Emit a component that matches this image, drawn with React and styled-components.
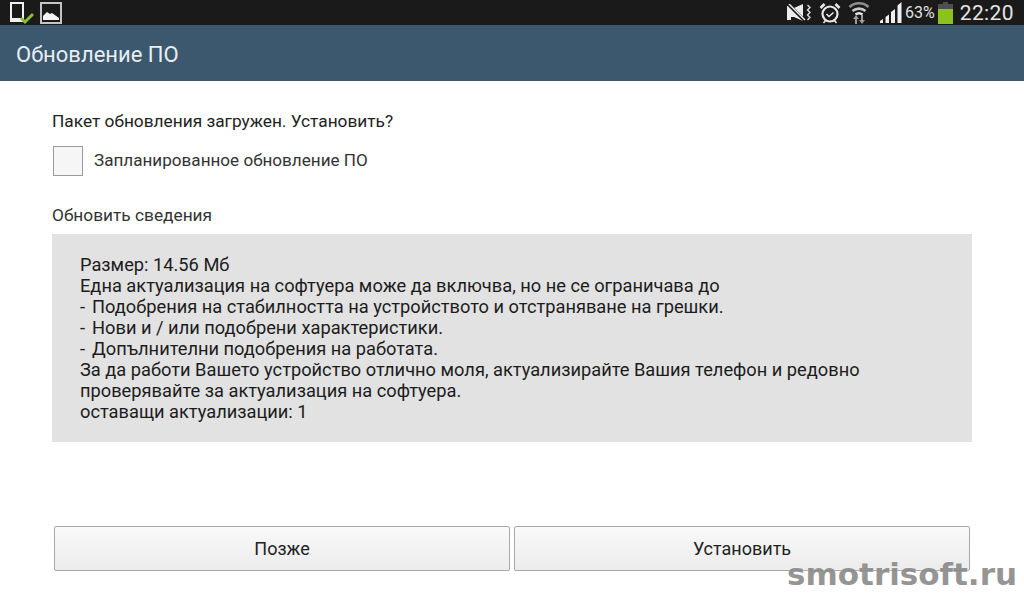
import styled, { createGlobalStyle } from "styled-components";

const GlobalStyle = createGlobalStyle`
    html, body {
        margin: 0;
        padding: 0;
        background: #ffffff;
    }
    * {
        box-sizing: border-box;
    }
`;

const Screen = styled.div`
    position: relative;
    width: 1024px;
    height: 600px;
    overflow: hidden;
    display: flex;
    flex-direction: column;
    background: #ffffff;
    font-family: Roboto, "Noto Sans", sans-serif;
    color: #222222;
`;

const StatusBar = styled.div`
    height: 25px;
    flex: none;
    display: flex;
    align-items: center;
    justify-content: space-between;
    padding: 0 10px;
    background: #1a1a1a;
`;

const StatusGroup = styled.div`
    display: flex;
    align-items: center;
    gap: ${(p) => p.$gap || 0}px;
`;

const IconSlot = styled.span`
    display: flex;
    margin-right: ${(p) => p.$right || 0}px;
`;

const Percent = styled.span`
    font-size: 16px;
    color: #e0e0e0;
    margin: 0 3px;
`;

const Clock = styled.span`
    font-size: 21px;
    color: #e4e4e4;
    margin-left: 7px;
    letter-spacing: 0.4px;
`;

const Header = styled.div`
    height: 56px;
    flex: none;
    display: flex;
    align-items: center;
    padding: 2px 16px 0;
    font-size: 22px;
    color: #e8eef2;
    background: #3c586f;
`;

const Content = styled.div`
    flex: 1;
    display: flex;
    flex-direction: column;
    padding: 30px 52px 0;
`;

const Question = styled.p`
    margin: 0;
    font-size: 17.3px;
    line-height: 20px;
`;

const CheckRow = styled.label`
    display: flex;
    align-items: center;
    gap: 11px;
    margin-top: 15px;
    padding-left: 1px;
    font-size: 17.1px;
    color: #333333;
`;

const CheckBox = styled.span`
    width: 30px;
    height: 30px;
    border: 1px solid #9a9a9a;
    background: #f6f6f6;
`;

const CheckText = styled.span`
    padding-bottom: 2px;
`;

const SectionTitle = styled.p`
    margin: 29px 0 0;
    font-size: 17.3px;
    line-height: 20px;
    color: #333333;
`;

const Details = styled.div`
    width: 920px;
    height: 208px;
    margin-top: 9px;
    padding: 19.6px 28px;
    background: #e2e2e2;
    font-size: 18.25px;
    line-height: 21.1px;
    color: #1c1c1c;
`;

const Dash = styled.span`
    margin-right: 2.5px;
`;

const Actions = styled.div`
    display: flex;
    gap: 4px;
    margin: 84px 2px 0;
`;

const ActionButton = styled.button`
    flex: 1;
    height: 45px;
    border: 1px solid #a8a8a8;
    border-radius: 2px;
    background: linear-gradient(#f9f9f9, #ececec);
    font-family: inherit;
    font-size: 18px;
    color: #222222;
`;

const Watermark = styled.div`
    position: absolute;
    right: 7px;
    bottom: 9px;
    font-family: "DejaVu Sans", sans-serif;
    font-weight: 700;
    font-size: 31px;
    line-height: 34px;
    color: #8a8a8a;
    opacity: 0.9;
    text-shadow: 0 0 2px #ffffff;
`;

const TabletIcon = () => (
    <svg width="24" height="25" viewBox="0 0 24 25">
        <path d="M1 3h12v18H1z" fill="none" stroke="#f0f0f0" strokeWidth="2" />
        <path d="M1 18h10v4H1z" fill="#f0f0f0" />
        <path d="M11 18l4 4 8-8" fill="none" stroke="#8dbb3a" strokeWidth="3" />
    </svg>
);

const PictureIcon = () => (
    <svg width="22" height="22" viewBox="0 0 22 22">
        <rect x="1" y="1" width="20" height="20" fill="none" stroke="#c4c4c4" strokeWidth="2" />
        <path d="M3 18v-4l4-4 3 2 2-1 7 5v2z" fill="#f4f4f4" />
    </svg>
);

const MuteIcon = () => (
    <svg width="24" height="17" viewBox="0 0 24 17">
        <path d="M0 1h4v3h3l9-4v17l-9-4H4v3H0z" fill="#ececec" />
        <path d="M1 0l17 17" stroke="#1a1a1a" strokeWidth="3.2" />
        <path d="M2 0l16 16" stroke="#f0f0f0" strokeWidth="1.4" />
        <path d="M20.500 1l2.500 2.500-2.500 2.500 2.500 2.500-2.500 2.500 2.500 2.500-2.500 2.500" fill="none" stroke="#dcdcdc" strokeWidth="1.4" />
    </svg>
);

const AlarmIcon = () => (
    <svg width="22" height="22" viewBox="0 0 22 22">
        <circle cx="11" cy="12" r="7.5" fill="none" stroke="#e8e8e8" strokeWidth="2.2" />
        <path d="M7.500 12l2.500 2.500 4.500-4" fill="none" stroke="#e8e8e8" strokeWidth="1.6" />
        <path d="M1.500 6l4-4M20.500 6l-4-4" stroke="#e8e8e8" strokeWidth="2.6" />
        <path d="M4.500 21l2-2.500M17.500 21l-2-2.500" stroke="#e8e8e8" strokeWidth="1.6" />
    </svg>
);

const WifiIcon = () => (
    <svg width="22" height="23" viewBox="0 0 22 23">
        <path d="M1.500 6a14 14 0 0 1 19 0" fill="none" stroke="#8e8e8e" strokeWidth="2.6" />
        <path d="M4.500 10a10 10 0 0 1 13 0" fill="none" stroke="#c8c8c8" strokeWidth="2.6" />
        <path d="M7.500 13.500a6 6 0 0 1 7 0" fill="none" stroke="#e8e8e8" strokeWidth="2.4" />
        <path d="M8 14l-3 4h2v5h2v-5h2zM14 23l3-4h-2v-5h-2v5h-2z" fill="#9c9c9c" />
    </svg>
);

const SignalIcon = () => (
    <svg width="22" height="22" viewBox="0 0 22 22">
        <path d="M0 19l3-2v4H0zM5.500 15l3.500-2.500V21H5.500zM11 10l4-3v14h-4zM17.500 3.500l4-3.500v21h-4z" fill="#efefef" />
    </svg>
);

const BatteryIcon = () => (
    <svg width="15" height="22" viewBox="0 0 15 22">
        <path d="M5 0h5v2h5v20H0V2h5z" fill="#4e4e4e" />
        <path d="M0 7h15v15H0z" fill="#8cc220" />
    </svg>
);

const App = () => {
    return (
        <Screen>
            <GlobalStyle />
            <StatusBar>
                <StatusGroup $gap={6}>
                    <TabletIcon />
                    <PictureIcon />
                </StatusGroup>
                <StatusGroup>
                    <IconSlot $right={8}>
                        <MuteIcon />
                    </IconSlot>
                    <IconSlot $right={7}>
                        <AlarmIcon />
                    </IconSlot>
                    <IconSlot $right={10}>
                        <WifiIcon />
                    </IconSlot>
                    <SignalIcon />
                    <Percent>63%</Percent>
                    <IconSlot>
                        <BatteryIcon />
                    </IconSlot>
                    <Clock>22:20</Clock>
                </StatusGroup>
            </StatusBar>
            <Header>Обновление ПО</Header>
            <Content>
                <Question>Пакет обновления загружен. Установить?</Question>
                <CheckRow>
                    <CheckBox />
                    <CheckText>Запланированное обновление ПО</CheckText>
                </CheckRow>
                <SectionTitle>Обновить сведения</SectionTitle>
                <Details>
                    Размер: 14.56 Мб
                    <br />
                    Една актуализация на софтуера може да включва, но не се ограничава до
                    <br />
                    <Dash>-</Dash> Подобрения на стабилността на устройството и отстраняване на грешки.
                    <br />
                    <Dash>-</Dash> Нови и / или подобрени характеристики.
                    <br />
                    <Dash>-</Dash> Допълнителни подобрения на работата.
                    <br />
                    За да работи Вашето устройство отлично моля, актуализирайте Вашия телефон и редовно
                    <br />
                    проверявайте за актуализация на софтуера.
                    <br />
                    оставащи актуализации: 1
                </Details>
                <Actions>
                    <ActionButton>Позже</ActionButton>
                    <ActionButton>Установить</ActionButton>
                </Actions>
            </Content>
            <Watermark>smotrisoft.ru</Watermark>
        </Screen>
    );
};

export default App;
